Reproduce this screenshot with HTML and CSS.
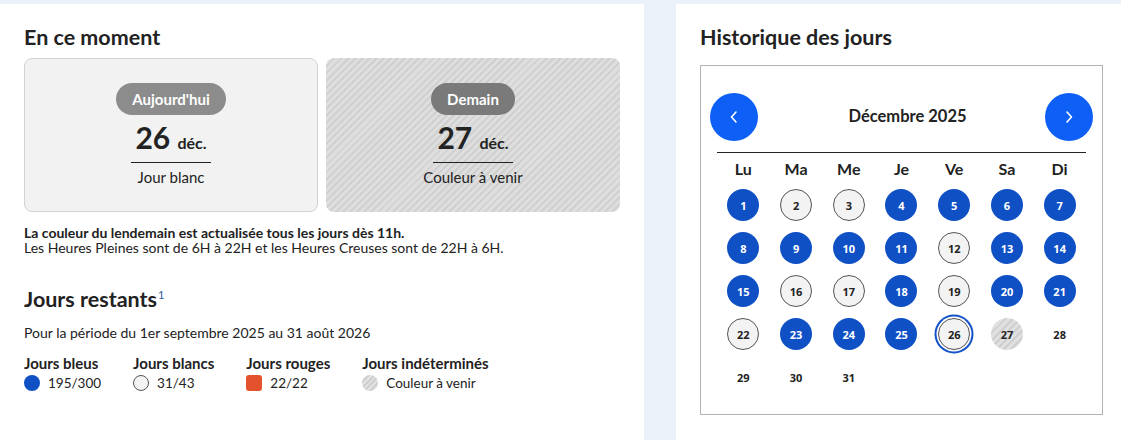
FILE: index.html
```html
<!DOCTYPE html>
<html lang="fr">
<head>
<meta charset="utf-8">
<title>Tempo</title>
<link rel="stylesheet" href="styles.css">
</head>
<body>
<div class="page">
  <section class="panel panel-left">
    <h2 class="title">En ce moment</h2>
    <div class="cards">
      <div class="card card-white">
        <span class="pill pill-today">Aujourd'hui</span>
        <div class="date"><span class="day">26</span> <span class="month">déc.</span></div>
        <div class="label">Jour blanc</div>
      </div>
      <div class="card card-striped">
        <span class="pill pill-tomorrow">Demain</span>
        <div class="date"><span class="day">27</span> <span class="month">déc.</span></div>
        <div class="label">Couleur à venir</div>
      </div>
    </div>
    <p class="info"><strong>La couleur du lendemain est actualisée tous les jours dès 11h.</strong><br>Les Heures Pleines sont de 6H à 22H et les Heures Creuses sont de 22H à 6H.</p>
    <h2 class="title title-remaining">Jours restants<sup class="note">1</sup></h2>
    <p class="period">Pour la période du 1er septembre 2025 au 31 août 2026</p>
    <div class="legend">
      <div class="legend-item">
        <div class="legend-label">Jours bleus</div>
        <div class="legend-value"><span class="swatch sw-blue"></span>195/300</div>
      </div>
      <div class="legend-item">
        <div class="legend-label">Jours blancs</div>
        <div class="legend-value"><span class="swatch sw-white"></span>31/43</div>
      </div>
      <div class="legend-item">
        <div class="legend-label">Jours rouges</div>
        <div class="legend-value"><span class="swatch sw-red"></span>22/22</div>
      </div>
      <div class="legend-item">
        <div class="legend-label">Jours indéterminés</div>
        <div class="legend-value"><span class="swatch sw-striped"></span>Couleur à venir</div>
      </div>
    </div>
  </section>

  <section class="panel panel-right">
    <h2 class="title">Historique des jours</h2>
    <div class="calendar">
      <div class="cal-header">
        <button class="nav-btn" aria-label="Mois précédent">
          <svg width="12" height="14" viewBox="0 0 12 14"><path d="M8 2 L3.5 7 L8 12" fill="none" stroke="#fff" stroke-width="1.6" stroke-linecap="round" stroke-linejoin="round"/></svg>
        </button>
        <div class="cal-month">Décembre 2025</div>
        <button class="nav-btn" aria-label="Mois suivant">
          <svg width="12" height="14" viewBox="0 0 12 14"><path d="M4 2 L8.5 7 L4 12" fill="none" stroke="#fff" stroke-width="1.6" stroke-linecap="round" stroke-linejoin="round"/></svg>
        </button>
      </div>
      <div class="cal-body">
        <div class="weekdays">
          <span>Lu</span><span>Ma</span><span>Me</span><span>Je</span><span>Ve</span><span>Sa</span><span>Di</span>
        </div>
        <div class="days">
          <span class="d blue">1</span><span class="d white">2</span><span class="d white">3</span><span class="d blue">4</span><span class="d blue">5</span><span class="d blue">6</span><span class="d blue">7</span>
          <span class="d blue">8</span><span class="d blue">9</span><span class="d blue">10</span><span class="d blue">11</span><span class="d white">12</span><span class="d blue">13</span><span class="d blue">14</span>
          <span class="d blue">15</span><span class="d white">16</span><span class="d white">17</span><span class="d blue">18</span><span class="d white">19</span><span class="d blue">20</span><span class="d blue">21</span>
          <span class="d white">22</span><span class="d blue">23</span><span class="d blue">24</span><span class="d blue">25</span><span class="d white today">26</span><span class="d striped">27</span><span class="d empty">28</span>
          <span class="d empty">29</span><span class="d empty">30</span><span class="d empty">31</span>
        </div>
      </div>
    </div>
  </section>
</div>
</body>
</html>
```

FILE: styles.css
```css
html, body {
  margin: 0;
  padding: 0;
}
body {
  background: #eaf1f9;
  font-family: Lato, "Open Sans", sans-serif;
  color: #222;
  width: 1121px;
  height: 440px;
  overflow: hidden;
}
.page {
  display: flex;
  gap: 32px;
  padding-top: 4px;
  height: 436px;
}
.panel {
  background: #fff;
  box-sizing: border-box;
  height: 436px;
}
.panel-left {
  width: 644px;
  padding: 23px 24px 0 24px;
}
.panel-right {
  flex: 1;
  padding: 23px 0 0 24px;
}
.title {
  margin: 0;
  font-size: 21.5px;
  line-height: 20px;
  font-weight: 700;
  color: #222;
}
.cards {
  display: grid;
  grid-template-columns: 1fr 1fr;
  gap: 8px;
  margin-top: 11px;
}
.card {
  height: 154px;
  box-sizing: border-box;
  border-radius: 8px;
  display: flex;
  flex-direction: column;
  align-items: center;
  padding-top: 24px;
}
.card-white {
  background: #f2f2f2;
  border: 1px solid #d2d2d2;
}
.card-striped {
  padding-top: 25px;
  background: repeating-linear-gradient(135deg, #d0d0d0 0 2px, #dedede 2px 5px);
}
.pill {
  display: inline-flex;
  align-items: center;
  height: 32px;
  padding: 0 16px;
  border-radius: 16px;
  color: #fff;
  font-weight: 700;
  font-size: 15px;
}
.pill-today {
  background: #8c8c8c;
}
.pill-tomorrow {
  background: #7a7a7a;
}
.date {
  width: 80px;
  margin-top: 4px;
  padding-bottom: 7px;
  border-bottom: 1px solid #222;
  text-align: center;
  font-size: 30px;
  line-height: 36px;
  font-weight: 700;
  white-space: nowrap;
}
.month {
  font-size: 16px;
  line-height: 1;
}
.label {
  margin-top: 4px;
  font-size: 15px;
  line-height: 20px;
}
.info {
  margin: 13px 0 0;
  font-size: 14px;
  line-height: 15px;
}
.info strong {
  font-weight: 700;
}
.title-remaining {
  margin-top: 34px;
}
.note {
  font-size: 11px;
  font-weight: 400;
  color: #2f5b9e;
  vertical-align: top;
  position: relative;
  top: -4px;
  margin-left: 1px;
}
.period {
  margin: 15px 0 0;
  font-size: 14px;
  line-height: 18px;
}
.legend {
  display: flex;
  gap: 32px;
  margin-top: 12px;
}
.legend-label {
  font-weight: 700;
  font-size: 15px;
  line-height: 18px;
}
.legend-value {
  display: flex;
  align-items: center;
  gap: 8px;
  font-size: 13.5px;
  line-height: 20px;
  margin-top: 1px;
}
.swatch {
  width: 16px;
  height: 16px;
  box-sizing: border-box;
  border-radius: 50%;
  flex: none;
}
.sw-blue {
  background: #0f50c5;
}
.sw-white {
  background: #f3f3f3;
  border: 1px solid #555;
}
.sw-red {
  background: #e4522d;
  border-radius: 3px;
}
.sw-striped {
  background: repeating-linear-gradient(135deg, #cfcfcf 0 2px, #e2e2e2 2px 4px);
}
.calendar {
  width: 403px;
  height: 350px;
  box-sizing: border-box;
  border: 1px solid #b3b3b3;
  margin-top: 18px;
  padding: 27px 9px 0;
}
.cal-header {
  display: flex;
  align-items: center;
  justify-content: space-between;
}
.nav-btn {
  width: 48px;
  height: 48px;
  border-radius: 50%;
  border: none;
  background: #0d5ff5;
  display: flex;
  align-items: center;
  justify-content: center;
  padding: 0;
}
.cal-month {
  font-size: 16.5px;
  line-height: 20px;
  font-weight: 700;
  color: #222;
  margin: -3px 0 0 12px;
}
.cal-body {
  margin: 11px 7px 0;
  border-top: 1px solid #222;
}
.weekdays, .days {
  display: grid;
  grid-template-columns: repeat(7, 1fr);
  justify-items: center;
}
.weekdays {
  padding-top: 6px;
  font-size: 16px;
  line-height: 20px;
  font-weight: 700;
}
.days {
  margin-top: 10px;
  row-gap: 11px;
}
.d {
  width: 32px;
  height: 32px;
  box-sizing: border-box;
  border-radius: 50%;
  display: flex;
  align-items: center;
  justify-content: center;
  font-family: "Open Sans", Lato, sans-serif;
  font-size: 11px;
  font-weight: 700;
  color: #222;
}
.d.blue {
  background: #0f50c5;
  color: #fff;
}
.d.white {
  background: #f3f3f3;
  border: 1px solid #555;
}
.d.today {
  box-shadow: 0 0 0 1.5px #fff, 0 0 0 3.5px #1452c8;
}
.d.striped {
  background: repeating-linear-gradient(135deg, #cfcfcf 0 2px, #e0e0e0 2px 5px);
}
```
